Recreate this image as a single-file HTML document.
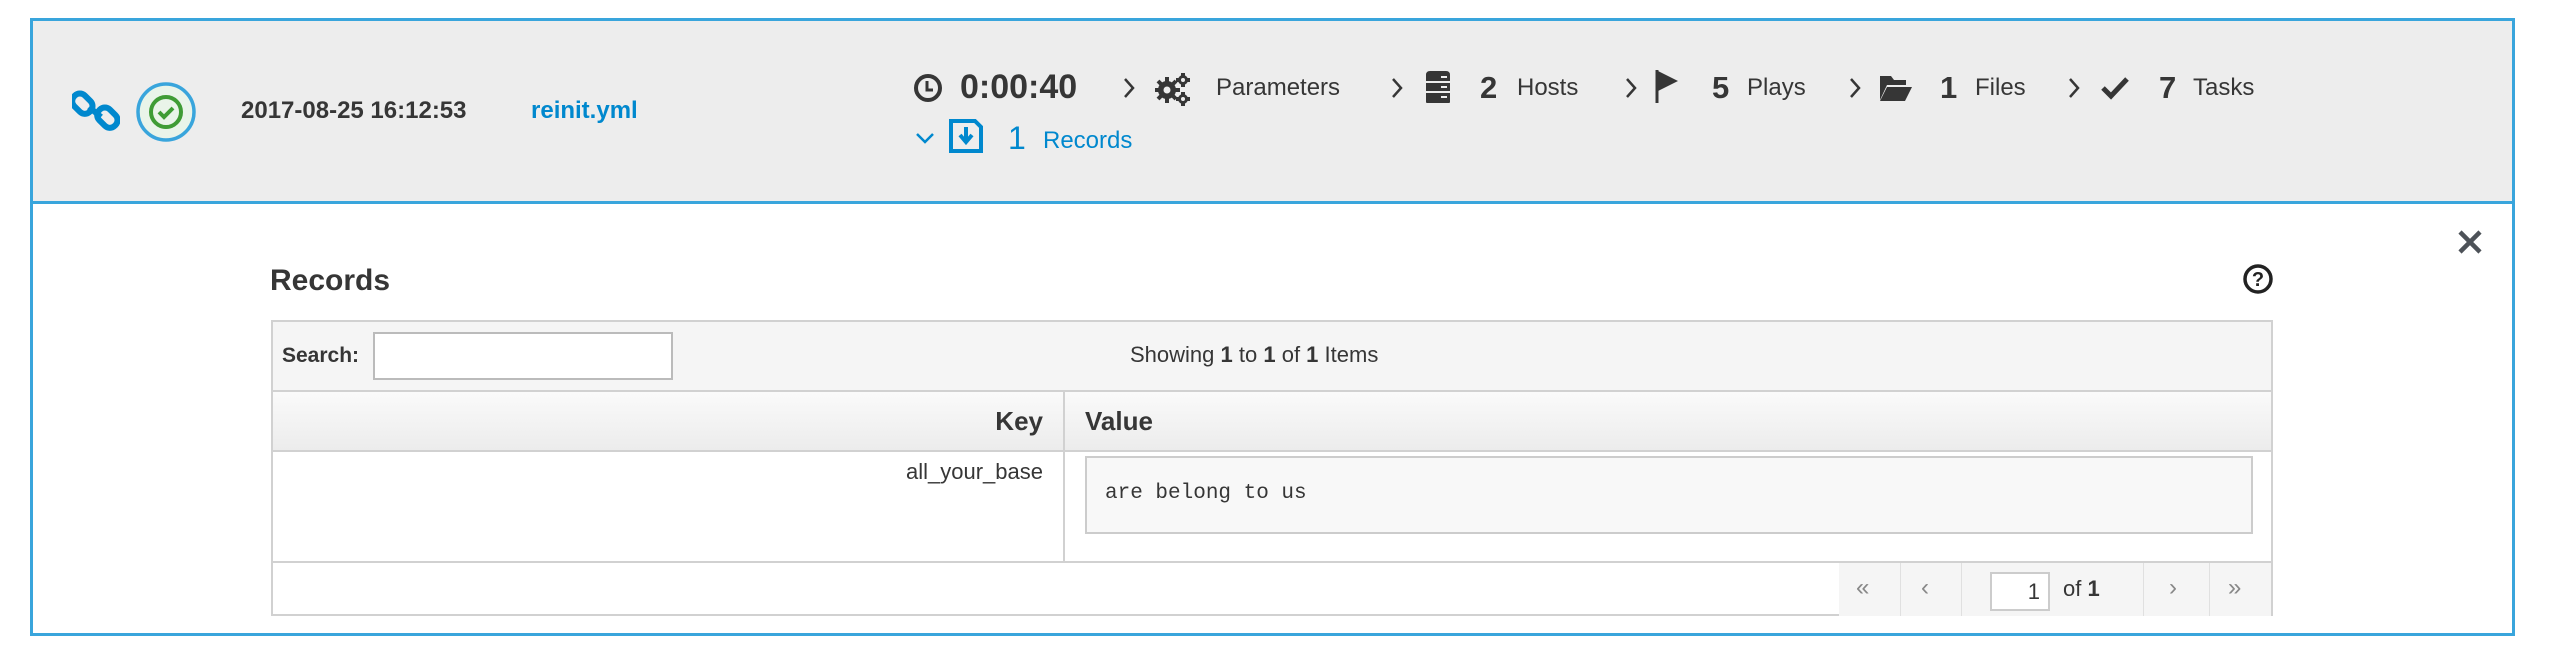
<!DOCTYPE html>
<html><head><meta charset="utf-8"><style>
*{box-sizing:border-box;margin:0;padding:0}
body{width:2560px;height:656px;background:#fff;font-family:"Liberation Sans",sans-serif;color:#363636;position:relative;overflow:hidden}
.a{position:absolute;white-space:nowrap}
.hdr{position:absolute;left:30px;top:18px;width:2485px;height:186px;background:#ededed;border:3px solid #39a5dc;}
.outer{position:absolute;left:30px;top:18px;width:2485px;height:618px;border:3px solid #39a5dc;}
.lbl{font-size:24px;color:#363636}
.num{font-size:31px;font-weight:bold;color:#363636}
.bl{color:#0088ce}
.tbl{position:absolute;left:271px;top:320px;width:2002px;height:296px;border:2px solid #d1d1d1}
</style></head><body>
<div class="outer"></div>
<div class="hdr"></div>
<svg class="a" style="left:72px;top:87px" width="48" height="48" viewBox="0 0 48 48"><g fill="none" stroke="#0088ce" stroke-width="6"><rect x="3" y="6" width="15" height="22" rx="7" transform="rotate(-45 10 17)"/><rect x="28" y="20" width="15" height="22" rx="7" transform="rotate(-45 35 31)"/><line x1="17" y1="20" x2="29" y2="30"/></g></svg>
<svg class="a" style="left:135px;top:81px" width="62" height="62" viewBox="0 0 62 62"><circle cx="31" cy="31" r="28" fill="#e9f4e9" stroke="#39a5dc" stroke-width="3.5"/><circle cx="31" cy="31" r="15" fill="none" stroke="#3f9c35" stroke-width="4"/><path d="M24 31l5 5 9-9" fill="none" stroke="#3f9c35" stroke-width="4"/></svg>
<div class="a" style="left:241px;top:97px;font-size:24px;font-weight:bold;color:#363636">2017-08-25 16:12:53</div>
<div class="a bl" style="left:531px;top:97px;font-size:24px;font-weight:bold">reinit.yml</div>
<svg class="a" style="left:913px;top:73px" width="30" height="30" viewBox="0 0 30 30"><circle cx="15" cy="15" r="12" fill="none" stroke="#363636" stroke-width="4"/><path d="M14 8v9h6" fill="none" stroke="#363636" stroke-width="3"/></svg>
<div class="a num" style="left:960px;top:68px;font-size:34px">0:00:40</div>
<svg class="a" style="left:1122px;top:76px" width="14" height="24" viewBox="0 0 14 24"><path d="M3 3l8 9-8 9" fill="none" stroke="#363636" stroke-width="2.5"/></svg>
<svg class="a" style="left:1155px;top:72px" width="36" height="34" viewBox="0 0 36 34"><g fill="#363636"><circle cx="12" cy="18" r="9"/><circle cx="28" cy="8" r="5"/><circle cx="28" cy="27" r="5"/></g><g stroke="#363636" stroke-width="4"><path d="M12 5v26M-1 18h26M3 9l18 18M3 27l18-18"/><path d="M28 1v14M21 8h14M28 20v14M21 27h14"/></g><circle cx="12" cy="18" r="3.5" fill="#ededed"/><circle cx="28" cy="8" r="2" fill="#ededed"/><circle cx="28" cy="27" r="2" fill="#ededed"/></svg>
<div class="a lbl" style="left:1216px;top:74px">Parameters</div>
<svg class="a" style="left:1390px;top:76px" width="14" height="24" viewBox="0 0 14 24"><path d="M3 3l8 9-8 9" fill="none" stroke="#363636" stroke-width="2.5"/></svg>
<svg class="a" style="left:1423px;top:70px" width="30" height="34" viewBox="0 0 30 34"><path d="M3 5q0-4 4-4h16q4 0 4 4v6H3z M3 13h24v8H3z M3 23h24v9q0 1-1 1H4q-1 0-1-1z" fill="#363636"/><rect x="18" y="16" width="6" height="2" fill="#ededed"/><rect x="18" y="26" width="6" height="2" fill="#ededed"/><rect x="18" y="6" width="6" height="2" fill="#ededed"/></svg>
<div class="a num" style="left:1480px;top:70px">2</div>
<div class="a lbl" style="left:1517px;top:74px">Hosts</div>
<svg class="a" style="left:1624px;top:76px" width="14" height="24" viewBox="0 0 14 24"><path d="M3 3l8 9-8 9" fill="none" stroke="#363636" stroke-width="2.5"/></svg>
<svg class="a" style="left:1654px;top:68px" width="28" height="36" viewBox="0 0 28 36"><path d="M3 2v33" stroke="#363636" stroke-width="3"/><path d="M4 3l20 10-20 10z" fill="#363636"/></svg>
<div class="a num" style="left:1712px;top:70px">5</div>
<div class="a lbl" style="left:1747px;top:74px">Plays</div>
<svg class="a" style="left:1848px;top:76px" width="14" height="24" viewBox="0 0 14 24"><path d="M3 3l8 9-8 9" fill="none" stroke="#363636" stroke-width="2.5"/></svg>
<svg class="a" style="left:1879px;top:74px" width="34" height="28" viewBox="0 0 34 28"><path d="M1 2h11l3 4h12v5H8L1 26z M8 13h25l-7 14H1z" fill="#363636"/></svg>
<div class="a num" style="left:1940px;top:70px">1</div>
<div class="a lbl" style="left:1975px;top:74px">Files</div>
<svg class="a" style="left:2067px;top:76px" width="14" height="24" viewBox="0 0 14 24"><path d="M3 3l8 9-8 9" fill="none" stroke="#363636" stroke-width="2.5"/></svg>
<svg class="a" style="left:2101px;top:76px" width="28" height="24" viewBox="0 0 28 24"><path d="M2 12l8 8L26 3" fill="none" stroke="#363636" stroke-width="5"/></svg>
<div class="a num" style="left:2159px;top:70px">7</div>
<div class="a lbl" style="left:2193px;top:74px">Tasks</div>
<svg class="a" style="left:914px;top:130px" width="22" height="16" viewBox="0 0 22 16"><path d="M3 4l8 8 8-8" fill="none" stroke="#0088ce" stroke-width="2.5"/></svg>
<svg class="a" style="left:949px;top:119px" width="34" height="34" viewBox="0 0 34 34"><path d="M2 2h24l6 6v24H2z" fill="none" stroke="#0088ce" stroke-width="4"/><path d="M17 8v14M11 16l6 7 6-7" fill="none" stroke="#0088ce" stroke-width="4"/></svg>
<div class="a num bl" style="left:1008px;top:120px;font-weight:normal;font-size:32px">1</div>
<div class="a bl" style="left:1043px;top:127px;font-size:24px">Records</div>
<svg class="a" style="left:2457px;top:229px" width="26" height="26" viewBox="0 0 26 26"><path d="M3 3l20 20M23 3L3 23" stroke="#4d5258" stroke-width="4.5"/></svg>
<div class="a" style="left:270px;top:264px;font-size:30px;font-weight:bold;color:#363636">Records</div>
<svg class="a" style="left:2242px;top:263px" width="32" height="32" viewBox="0 0 32 32"><circle cx="16" cy="16" r="13" fill="none" stroke="#222" stroke-width="3.5"/><text x="16" y="23" font-family="Liberation Sans" font-weight="bold" font-size="20" text-anchor="middle" fill="#222">?</text></svg>
<div class="tbl">
 <div class="a" style="left:0;top:0;width:1998px;height:70px;background:#f5f5f5;border-bottom:2px solid #d1d1d1"></div>
 <div class="a" style="left:9px;top:22px;font-size:21px;font-weight:bold">Search:</div>
 <div class="a" style="left:100px;top:10px;width:300px;height:48px;background:#fff;border:2px solid #bbb"></div>
 <div class="a" style="left:857px;top:20px;font-size:22px">Showing <b>1</b> to <b>1</b> of <b>1</b> Items</div>
 <div class="a" style="left:0;top:70px;width:1998px;height:60px;background:linear-gradient(#fafafa,#ececec);border-bottom:2px solid #d1d1d1"></div>
 <div class="a" style="left:600px;width:170px;text-align:right;top:84px;font-size:26px;font-weight:bold">Key</div>
 <div class="a" style="left:790px;top:70px;width:2px;height:170px;background:#d1d1d1"></div>
 <div class="a" style="left:812px;top:84px;font-size:26px;font-weight:bold">Value</div>
 <div class="a" style="left:600px;top:137px;font-size:22px;width:170px;text-align:right">all_your_base</div>
 <div class="a" style="left:812px;top:134px;width:1168px;height:78px;background:#f8f8f8;border:2px solid #ccc"></div>
 <div class="a" style="left:832px;top:160px;font-family:'Liberation Mono',monospace;font-size:21px">are belong to us</div>
 <div class="a" style="left:0;top:239px;width:1998px;height:2px;background:#d1d1d1"></div>
 <div class="a" style="left:1566px;top:241px;width:432px;height:53px;background:#f5f5f5"></div>
 <div class="a" style="left:1627px;top:241px;width:1px;height:53px;background:#e0e0e0"></div>
 <div class="a" style="left:1688px;top:241px;width:1px;height:53px;background:#e0e0e0"></div>
 <div class="a" style="left:1870px;top:241px;width:1px;height:53px;background:#e0e0e0"></div>
 <div class="a" style="left:1936px;top:241px;width:1px;height:53px;background:#e0e0e0"></div>
 <div class="a" style="left:1583px;top:252px;font-size:24px;color:#888">&laquo;</div>
 <div class="a" style="left:1648px;top:252px;font-size:24px;color:#888">&lsaquo;</div>
 <div class="a" style="left:1717px;top:250px;width:60px;height:39px;background:#fff;border:2px solid #ccc;font-size:22px;text-align:right;padding:5px 8px 0 0">1</div>
 <div class="a" style="left:1790px;top:254px;font-size:22px">of <b>1</b></div>
 <div class="a" style="left:1896px;top:252px;font-size:24px;color:#888">&rsaquo;</div>
 <div class="a" style="left:1955px;top:252px;font-size:24px;color:#888">&raquo;</div>
</div>
</body></html>
